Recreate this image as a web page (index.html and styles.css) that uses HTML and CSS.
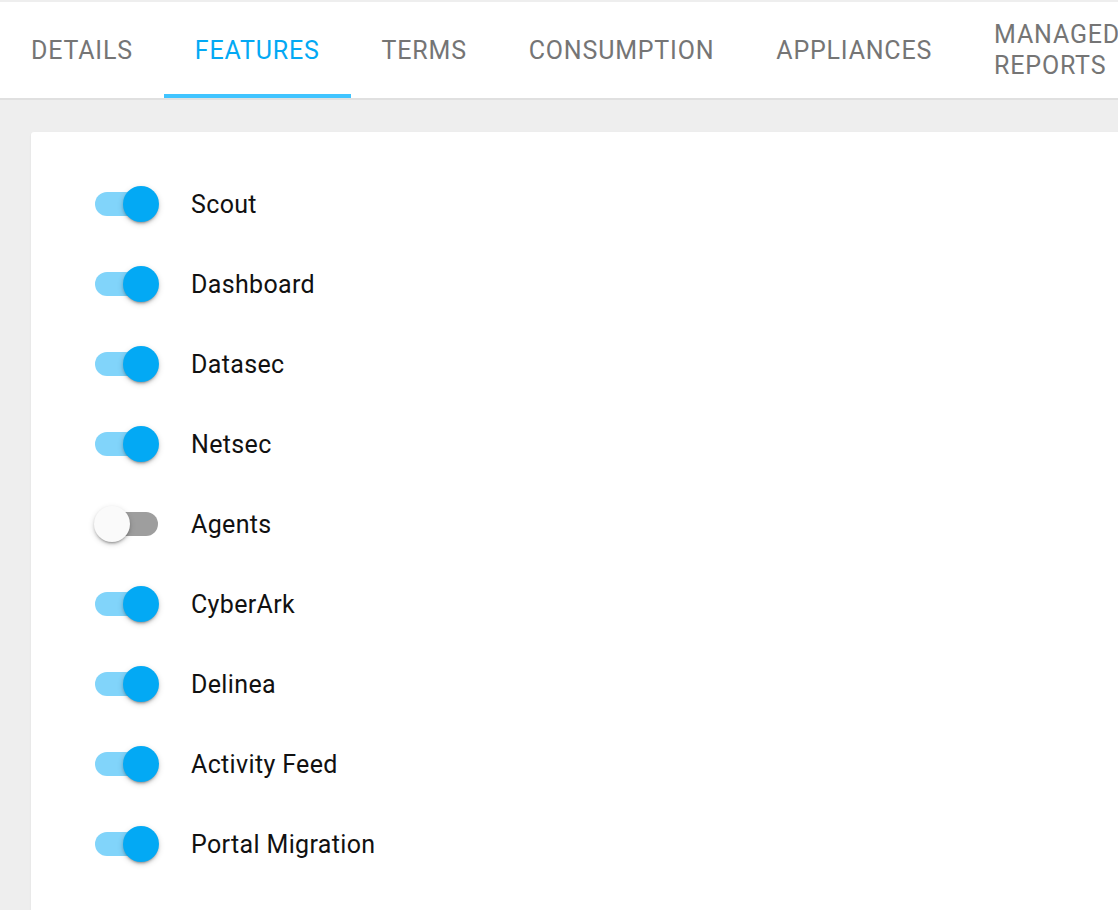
FILE: index.html
```html
<!DOCTYPE html>
<html>
<head>
<meta charset="utf-8">
<link rel="stylesheet" href="styles.css">
</head>
<body>
<div class="tabs">
  <div class="tab">DETAILS</div>
  <div class="tab active">FEATURES<span class="indicator"></span></div>
  <div class="tab">TERMS</div>
  <div class="tab">CONSUMPTION</div>
  <div class="tab">APPLIANCES</div>
  <div class="tab"><span class="wrap">MANAGED REPORTS</span></div>
</div>
<div class="content">
  <div class="card">
    <div class="row"><span class="switch on"><span class="track"></span><span class="thumb"></span></span><span class="label">Scout</span></div>
    <div class="row"><span class="switch on"><span class="track"></span><span class="thumb"></span></span><span class="label">Dashboard</span></div>
    <div class="row"><span class="switch on"><span class="track"></span><span class="thumb"></span></span><span class="label">Datasec</span></div>
    <div class="row"><span class="switch on"><span class="track"></span><span class="thumb"></span></span><span class="label">Netsec</span></div>
    <div class="row"><span class="switch off"><span class="track"></span><span class="thumb"></span></span><span class="label">Agents</span></div>
    <div class="row"><span class="switch on"><span class="track"></span><span class="thumb"></span></span><span class="label">CyberArk</span></div>
    <div class="row"><span class="switch on"><span class="track"></span><span class="thumb"></span></span><span class="label">Delinea</span></div>
    <div class="row"><span class="switch on"><span class="track"></span><span class="thumb"></span></span><span class="label">Activity Feed</span></div>
    <div class="row"><span class="switch on"><span class="track"></span><span class="thumb"></span></span><span class="label">Portal Migration</span></div>
  </div>
</div>
</body>
</html>
```

FILE: styles.css
```css
html, body {
  margin: 0;
  padding: 0;
  background: #eeeeee;
  font-family: Roboto, "Liberation Sans", Arial, sans-serif;
  overflow: hidden;
  height: 910px;
}

.tabs {
  margin-top: 2px;
  height: 96px;
  background: #ffffff;
  border-bottom: 2px solid #e0e0e0;
  display: flex;
  white-space: nowrap;
  overflow: hidden;
}

.tab {
  position: relative;
  flex: none;
  display: flex;
  align-items: center;
  padding: 0 31px 0 31px;
  font-size: 25px;
  letter-spacing: 0.8px;
  color: #757575;
  height: 96px;
}

.tab.active {
  color: #03a9f4;
}

.indicator {
  position: absolute;
  left: 0;
  right: 0;
  bottom: 0;
  height: 4px;
  background: #40c4ff;
}

.wrap {
  white-space: normal;
  width: 140px;
  line-height: 31px;
  text-align: left;
}

.content {
  padding: 32px 0 0 31px;
}

.card {
  width: 1150px;
  min-height: 900px;
  background: #ffffff;
  border-radius: 3px;
  box-shadow: 0 1px 2px rgba(0, 0, 0, 0.08);
  padding: 32px 0 0 64px;
  box-sizing: border-box;
}

.row {
  height: 80px;
  display: flex;
  align-items: center;
}

.switch {
  position: relative;
  flex: none;
  width: 64px;
  height: 36px;
}

.track {
  position: absolute;
  left: 0;
  right: 1px;
  top: 6px;
  height: 24px;
  border-radius: 12px;
}

.thumb {
  position: absolute;
  top: 0;
  width: 36px;
  height: 36px;
  border-radius: 50%;
  box-shadow: 0 3px 2px -2px rgba(0, 0, 0, 0.22), 0 2px 3px rgba(0, 0, 0, 0.16), 0 2px 6px rgba(0, 0, 0, 0.14);
}

.switch.on .track {
  background: #81d4fa;
}

.switch.on .thumb {
  left: 28px;
  background: #03a9f4;
}

.switch.off .track {
  background: #9e9e9e;
}

.switch.off .thumb {
  left: -1px;
  background: #fafafa;
}

.label {
  margin-left: 32px;
  padding-top: 1px;
  font-size: 25px;
  letter-spacing: 0.35px;
  color: #111111;
}
```
